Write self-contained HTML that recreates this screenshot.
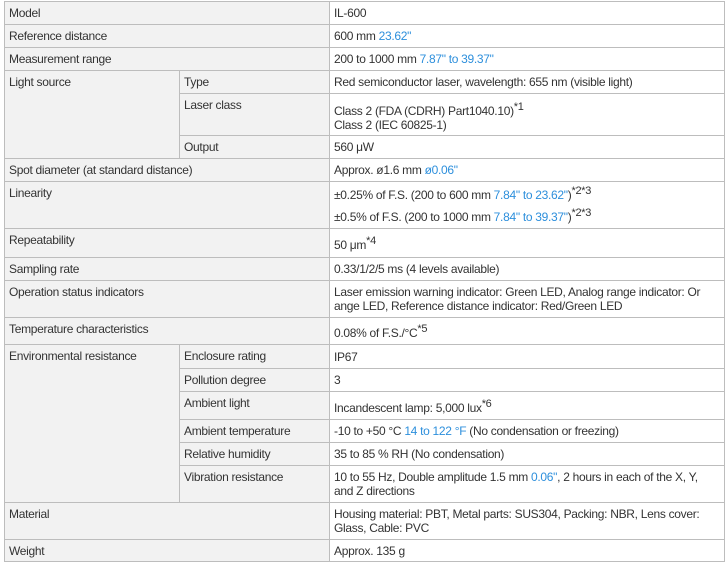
<!DOCTYPE html>
<html><head><meta charset="utf-8"><style>
html,body{margin:0;padding:0;background:#fff;width:727px;height:563px;overflow:hidden}
table{position:absolute;left:4px;top:1px;border-collapse:collapse;table-layout:fixed;width:720px;font-family:"Liberation Sans",sans-serif;font-size:12px;letter-spacing:-0.3px;color:#333}
td{border:1px solid #bdbdbd;padding:0 4px;line-height:14px;white-space:nowrap;overflow:hidden}
td.l{background:#f2f2f2;vertical-align:top;padding-top:4px}
td.v{background:#fff;vertical-align:middle}
.b{color:#2d8fdc}
sup{font-size:11px;line-height:0;vertical-align:5px}
</style></head><body>
<table>
<colgroup><col style="width:175px"><col style="width:150px"><col style="width:395px"></colgroup>
<tr style="height:23px"><td class="l" colspan="2">Model</td><td class="v">IL-600</td></tr>
<tr style="height:23px"><td class="l" colspan="2">Reference distance</td><td class="v">600 mm <span class="b">23.62"</span></td></tr>
<tr style="height:23px"><td class="l" colspan="2">Measurement range</td><td class="v">200 to 1000 mm <span class="b">7.87" to 39.37"</span></td></tr>
<tr style="height:23px"><td class="l" rowspan="3">Light source</td><td class="l">Type</td><td class="v">Red semiconductor laser, wavelength: 655 nm (visible light)</td></tr>
<tr style="height:42px"><td class="l">Laser class</td><td class="v" style="padding-top:6px">Class 2 (FDA (CDRH) Part1040.10)<sup>*1</sup><br>Class 2 (IEC 60825-1)</td></tr>
<tr style="height:23px"><td class="l">Output</td><td class="v">560 μW</td></tr>
<tr style="height:23px"><td class="l" colspan="2">Spot diameter (at standard distance)</td><td class="v">Approx. ø1.6 mm <span class="b">ø0.06"</span></td></tr>
<tr style="height:46px"><td class="l" colspan="2">Linearity</td><td class="v" style="line-height:22px;padding-top:2px">±0.25% of F.S. (200 to 600 mm <span class="b">7.84" to 23.62"</span>)<sup>*2*3</sup><br>±0.5% of F.S. (200 to 1000 mm <span class="b">7.84" to 39.37"</span>)<sup>*2*3</sup></td></tr>
<tr style="height:29px"><td class="l" colspan="2">Repeatability</td><td class="v" style="padding-top:4px">50 μm<sup>*4</sup></td></tr>
<tr style="height:23px"><td class="l" colspan="2">Sampling rate</td><td class="v">0.33/1/2/5 ms (4 levels available)</td></tr>
<tr style="height:37px"><td class="l" colspan="2">Operation status indicators</td><td class="v">Laser emission warning indicator: Green LED, Analog range indicator: Or<br>ange LED, Reference distance indicator: Red/Green LED</td></tr>
<tr style="height:27px"><td class="l" colspan="2">Temperature characteristics</td><td class="v" style="padding-top:4px">0.08% of F.S./°C<sup>*5</sup></td></tr>
<tr style="height:24px"><td class="l" rowspan="6">Environmental resistance</td><td class="l">Enclosure rating</td><td class="v">IP67</td></tr>
<tr style="height:23px"><td class="l">Pollution degree</td><td class="v">3</td></tr>
<tr style="height:28px"><td class="l">Ambient light</td><td class="v" style="padding-top:4px">Incandescent lamp: 5,000 lux<sup>*6</sup></td></tr>
<tr style="height:23px"><td class="l">Ambient temperature</td><td class="v">-10 to +50 °C <span class="b">14 to 122 °F</span> (No condensation or freezing)</td></tr>
<tr style="height:23px"><td class="l">Relative humidity</td><td class="v">35 to 85 % RH (No condensation)</td></tr>
<tr style="height:37px"><td class="l">Vibration resistance</td><td class="v">10 to 55 Hz, Double amplitude 1.5 mm <span class="b">0.06"</span>, 2 hours in each of the X, Y,<br>and Z directions</td></tr>
<tr style="height:37px"><td class="l" colspan="2">Material</td><td class="v">Housing material: PBT, Metal parts: SUS304, Packing: NBR, Lens cover:<br>Glass, Cable: PVC</td></tr>
<tr style="height:22px"><td class="l" colspan="2">Weight</td><td class="v">Approx. 135 g</td></tr>
</table>
</body></html>
